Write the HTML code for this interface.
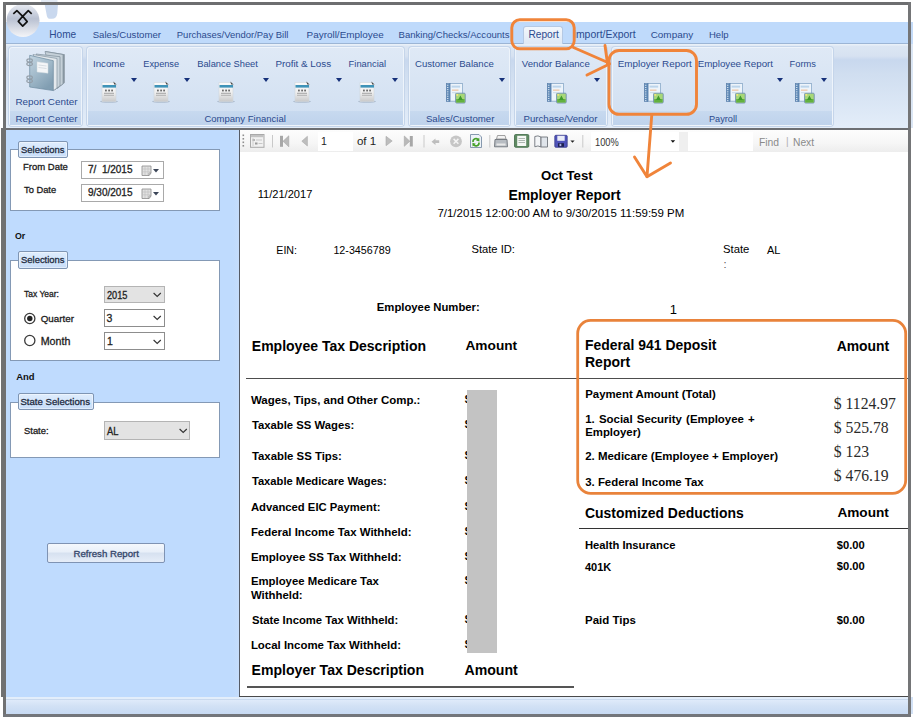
<!DOCTYPE html>
<html><head><meta charset="utf-8">
<style>
*{margin:0;padding:0;box-sizing:border-box}
html,body{width:913px;height:721px;overflow:hidden;background:#fff;font-family:"Liberation Sans",sans-serif}
.a{position:absolute;white-space:nowrap}
.grp{position:absolute;top:47px;height:79px;border:1px solid #eef4fb;border-radius:3px;background:linear-gradient(#dfe9f6,#d6e3f3 60%,#d0dff2);box-shadow:0 0 0 1px #c5d5ea}
.glab{position:absolute;left:0;right:0;bottom:0;height:14px;background:linear-gradient(#c7d9ef,#bfd3ec)}
.dd{position:absolute;top:77.5px;width:0;height:0;border-left:3.5px solid transparent;border-right:3.5px solid transparent;border-top:4px solid #16317a}
.ic{position:absolute}
</style></head><body>
<svg width="0" height="0" style="position:absolute">
<defs>
<linearGradient id="docg" x1="0" y1="0" x2="0" y2="1"><stop offset="0" stop-color="#fafafa"/><stop offset="0.55" stop-color="#eeeeee"/><stop offset="1" stop-color="#c9c9c9"/></linearGradient>
<linearGradient id="orbg" x1="0" y1="0" x2="0" y2="1"><stop offset="0" stop-color="#e9ecf3"/><stop offset="0.45" stop-color="#b9c1d2"/><stop offset="0.6" stop-color="#c9cfdc"/><stop offset="1" stop-color="#f4f5f8"/></linearGradient>
<linearGradient id="bookc" x1="0" y1="0" x2=".6" y2="1"><stop offset="0" stop-color="#c3d5e1"/><stop offset=".5" stop-color="#a3bbcb"/><stop offset="1" stop-color="#819eb2"/></linearGradient>
<symbol id="doc" viewBox="0 0 18 22">
 <ellipse cx="9" cy="20.6" rx="9" ry="1.1" fill="#7f8ea3" opacity=".45"/>
 <path d="M2 1.5 H14.5 L16 3 V20.5 H2 Z" fill="url(#docg)" stroke="#d2d6dc" stroke-width=".6"/>
 <rect x="2.5" y="4" width="13.5" height="2.6" fill="#3f93b8"/>
 <path d="M13.3 0.6 L16.6 3.6 L14.2 3.6 Z" fill="#4b4b4b"/>
 <rect x="5" y="8.6" width="1.8" height="1.8" fill="#6d6d6d"/><rect x="8.2" y="8.6" width="1.8" height="1.8" fill="#6d6d6d"/><rect x="11.2" y="8.6" width="1.8" height="1.8" fill="#6d6d6d"/>
 <rect x="4" y="11.8" width="10" height=".9" fill="#9a9a9a"/><rect x="4" y="13.8" width="10" height=".9" fill="#aaaaaa"/>
</symbol>
<symbol id="book" viewBox="0 0 20 21">
 <rect x="3.6" y="0.6" width="13" height="17.6" fill="#edf4fb" stroke="#89a9c8" stroke-width=".8"/>
 <rect x="0.3" y="0.6" width="3.8" height="18" fill="#5f89b6" stroke="#4c73a0" stroke-width=".5"/>
 <g fill="#dce8f4"><rect x="1" y="1.8" width="1.4" height=".9"/><rect x="1" y="4" width="1.4" height=".9"/><rect x="1" y="6.2" width="1.4" height=".9"/><rect x="1" y="8.4" width="1.4" height=".9"/><rect x="1" y="10.6" width="1.4" height=".9"/><rect x="1" y="12.8" width="1.4" height=".9"/><rect x="1" y="15" width="1.4" height=".9"/><rect x="1" y="17.2" width="1.4" height=".9"/></g>
 <rect x="5.6" y="2.6" width="8.6" height="2" fill="#bcd4ea"/>
 <rect x="6" y="6.4" width="6.5" height="1.6" fill="#efcfb5"/>
 <rect x="6" y="9.2" width="4" height="1" fill="#c9d9e8"/>
 <rect x="9.6" y="10.2" width="9.6" height="9.8" rx="1" fill="#a8d878" stroke="#6e8fae" stroke-width=".9"/>
 <rect x="10.2" y="16" width="8.4" height="3.4" fill="#62b13f"/>
 <path d="M12 17 L14.4 12.6 L16.8 17 Z" fill="#3e9a2c"/>
 <rect x="10.4" y="11" width="1.8" height="1.8" fill="#f4e27a"/>
</symbol>
</defs>
</svg>

<!-- title area -->
<div class="a" style="left:0;top:0;width:913px;height:22px;background:#fff"></div>
<!-- ghost arc -->
<svg class="ic" style="left:0;top:0" width="70" height="22"><path d="M41 0 H57.5 V2 H41 Z" fill="#e3eaf4"/><path d="M44.6 4 H58 L57.3 13.5 Q56.5 18.8 52 18.8 L49.5 18.8 Q47 18.8 46.5 14 Z" fill="#c9d8ee"/></svg>

<!-- tab bar -->
<div class="a" style="left:6px;top:22px;width:902px;height:22px;background:#bfdafb;border-bottom:1px solid #9cb5d5"></div>
<!-- active Report tab -->
<div class="a" style="left:523px;top:26px;width:40px;height:19px;border:1px solid #b5c9e4;border-bottom:none;border-radius:3px 3px 0 0;background:linear-gradient(#f3f7fc,#dce7f5)"></div>

<!-- ribbon body -->
<div class="a" style="left:6px;top:44px;width:902px;height:84px;background:linear-gradient(#e9f0f8 0,#e9f0f8 1px,#dce6f3 2px,#d7e2f1 12px,#c8d8ee 16px,#d0def0 30px,#e3edf9 83px)"></div>

<div class="grp" style="left:9px;width:73px"><div class="glab"></div></div>
<div class="grp" style="left:87px;width:317px"><div class="glab"></div></div>
<div class="grp" style="left:409px;width:101px"><div class="glab"></div></div>
<div class="grp" style="left:515px;width:92px"><div class="glab"></div></div>
<div class="grp" style="left:612px;width:221px"><div class="glab"></div></div>

<!-- dropdown arrows -->
<div class="dd" style="left:130.5px"></div>
<div class="dd" style="left:183.5px"></div>
<div class="dd" style="left:262.7px"></div>
<div class="dd" style="left:335.6px"></div>
<div class="dd" style="left:391.8px"></div>
<div class="dd" style="left:498.6px"></div>
<div class="dd" style="left:593.9px"></div>
<div class="dd" style="left:776.5px"></div>
<div class="dd" style="left:821px"></div>

<!-- doc icons -->
<svg class="ic" style="left:99.5px;top:80.8px" width="18" height="22"><use href="#doc"/></svg>
<svg class="ic" style="left:151.5px;top:80.8px" width="18" height="22"><use href="#doc"/></svg>
<svg class="ic" style="left:216.8px;top:80.8px" width="18" height="22"><use href="#doc"/></svg>
<svg class="ic" style="left:292.7px;top:80.8px" width="18" height="22"><use href="#doc"/></svg>
<svg class="ic" style="left:358.2px;top:80.8px" width="18" height="22"><use href="#doc"/></svg>
<!-- book icons -->
<svg class="ic" style="left:445.5px;top:82.5px" width="20" height="21"><use href="#book"/></svg>
<svg class="ic" style="left:547px;top:82.5px" width="20" height="21"><use href="#book"/></svg>
<svg class="ic" style="left:644px;top:82.5px" width="20" height="21"><use href="#book"/></svg>
<svg class="ic" style="left:725.5px;top:82.5px" width="20" height="21"><use href="#book"/></svg>
<svg class="ic" style="left:795px;top:82.5px" width="20" height="21"><use href="#book"/></svg>

<!-- report center icon -->
<svg class="ic" style="left:24px;top:48px" width="44" height="48" viewBox="0 0 44 48">
 <path d="M21.3 3 L40.8 6.3 L40.8 34.7 L33 41 Z" fill="#8d9aa5"/>
 <path d="M21 3.5 L39 6.5 L39 36 L31 41.5 Z" fill="#c5d0d8" stroke="#7f8f9c" stroke-width=".7"/>
 <path d="M12 6 L36 8.7 L36 38 L30 42 Z" fill="#c9d4dc" stroke="#7d8d9a" stroke-width=".7"/>
 <path d="M9 6.5 L33 10.5 L33 40 L29.5 42.6 Z" fill="#e4e9ed" stroke="#8595a2" stroke-width=".7"/>
 <path d="M5.7 7.3 L29.3 12.7 L29.3 42.6 L5.7 39 Z" fill="url(#bookc)" stroke="#6b899f" stroke-width=".7"/>
 <path d="M13 13.7 L24 15.3 L24 25.2 L13 24 Z" fill="#f4f6f8" stroke="#cfd8df" stroke-width=".5"/>
 <path d="M14.5 17 L22.5 18 M14.5 19.5 L22.5 20.5" stroke="#c2ccd4" stroke-width=".6"/>
 <ellipse cx="5.6" cy="12.5" rx="2.8" ry="1.6" fill="none" stroke="#939ea8" stroke-width="1.1"/>
 <ellipse cx="5.6" cy="16" rx="2.8" ry="1.6" fill="none" stroke="#939ea8" stroke-width="1.1"/>
 <ellipse cx="5.6" cy="29.5" rx="2.8" ry="1.6" fill="none" stroke="#939ea8" stroke-width="1.1"/>
 <ellipse cx="5.6" cy="33" rx="2.8" ry="1.6" fill="none" stroke="#939ea8" stroke-width="1.1"/>
</svg>

<!-- orb -->
<svg class="ic" style="left:5px;top:3px" width="38" height="36" viewBox="0 0 38 36">
 <circle cx="18" cy="17.5" r="16.5" fill="url(#orbg)"/>
 <path d="M8.3 10.8 L11.9 7.6 L17.7 13.3 L23.3 7.6 L26.7 10.8" fill="none" stroke="#111" stroke-width="1.7" stroke-linejoin="round"/>
 <path d="M17.7 13.3 L22.2 18.6 L17.7 23.1 L13.3 18.4 Z" fill="none" stroke="#111" stroke-width="1.7" stroke-linejoin="round"/>
</svg>
<!-- gray separator under ribbon -->
<div class="a" style="left:3px;top:128px;width:908px;height:2px;background:#6d6f73"></div>

<!-- left panel -->
<div class="a" style="left:6px;top:130px;width:233px;height:567px;background:#bfdbfe"></div>
<div class="a" style="left:233px;top:130px;width:6px;height:567px;background:linear-gradient(90deg,#bfdbfe,#c5ddfc)"></div>
<div class="a" style="left:238.8px;top:130px;width:1.3px;height:567px;background:#555b66"></div>

<!-- group boxes left panel -->
<div class="a" style="left:9.5px;top:149px;width:210px;height:62px;background:#fff;border:1px solid #8499b5"></div>
<div class="a" style="left:9.5px;top:259.5px;width:210px;height:101.5px;background:#fff;border:1px solid #8499b5"></div>
<div class="a" style="left:9.5px;top:402px;width:210px;height:56px;background:#fff;border:1px solid #8499b5"></div>
<div class="a" style="left:17.8px;top:140.5px;width:50px;height:17.5px;background:linear-gradient(#dfedfd,#c8ddf8);border:1px solid #7f95b3;border-radius:2px;box-shadow:inset 0 0 0 1px rgba(255,255,255,.45)"></div>
<div class="a" style="left:17.8px;top:251px;width:50px;height:17.5px;background:linear-gradient(#dfedfd,#c8ddf8);border:1px solid #7f95b3;border-radius:2px;box-shadow:inset 0 0 0 1px rgba(255,255,255,.45)"></div>
<div class="a" style="left:17.8px;top:392.7px;width:76px;height:17px;background:linear-gradient(#dfedfd,#c8ddf8);border:1px solid #7f95b3;border-radius:2px;box-shadow:inset 0 0 0 1px rgba(255,255,255,.45)"></div>

<!-- date pickers -->
<div class="a" style="left:80.8px;top:160.8px;width:83.5px;height:18.6px;background:#fff;border:1px solid #a9a9a9"></div>
<div class="a" style="left:80.8px;top:183.6px;width:83.5px;height:18.8px;background:#fff;border:1px solid #a9a9a9"></div>
<svg class="ic" style="left:140.5px;top:164.8px" width="19" height="12" viewBox="0 0 19 12">
 <path d="M1 1 H10 V8 L8 10.5 H1 Z" fill="#e2e2e2" stroke="#8c8c8c" stroke-width=".8"/><path d="M1.5 4 H9.5 M1.5 6.8 H9.5 M4 1.5 V10 M7 1.5 V10" stroke="#bdbdbd" stroke-width=".6"/><path d="M10 8 L8 10.5 L8 8 Z" fill="#f3f3f3" stroke="#8c8c8c" stroke-width=".6"/>
 <path d="M12 4 H18 L15 7.5 Z" fill="#3c4658"/>
</svg>
<svg class="ic" style="left:140.5px;top:187.6px" width="19" height="12" viewBox="0 0 19 12">
 <path d="M1 1 H10 V8 L8 10.5 H1 Z" fill="#e2e2e2" stroke="#8c8c8c" stroke-width=".8"/><path d="M1.5 4 H9.5 M1.5 6.8 H9.5 M4 1.5 V10 M7 1.5 V10" stroke="#bdbdbd" stroke-width=".6"/><path d="M10 8 L8 10.5 L8 8 Z" fill="#f3f3f3" stroke="#8c8c8c" stroke-width=".6"/>
 <path d="M12 4 H18 L15 7.5 Z" fill="#3c4658"/>
</svg>

<!-- combos -->
<div class="a" style="left:103.5px;top:285.6px;width:61px;height:17.3px;background:#e3e3e3;border:1px solid #b4b4b4"></div>
<div class="a" style="left:103.5px;top:309px;width:61px;height:17.7px;background:#fff;border:1px solid #8d8d8d"></div>
<div class="a" style="left:103.5px;top:332.4px;width:61px;height:17.8px;background:#fff;border:1px solid #8d8d8d"></div>
<div class="a" style="left:103.5px;top:421.4px;width:86px;height:18.4px;background:#e3e3e3;border:1px solid #b4b4b4"></div>
<svg class="ic" style="left:151.8px;top:290.8px" width="10" height="7"><path d="M1.6 2 L5.2 5.4 L8.8 2" fill="none" stroke="#333" stroke-width="1.15"/></svg>
<svg class="ic" style="left:151.8px;top:314.2px" width="10" height="7"><path d="M1.6 2 L5.2 5.4 L8.8 2" fill="none" stroke="#333" stroke-width="1.15"/></svg>
<svg class="ic" style="left:151.8px;top:337.8px" width="10" height="7"><path d="M1.6 2 L5.2 5.4 L8.8 2" fill="none" stroke="#333" stroke-width="1.15"/></svg>
<svg class="ic" style="left:177.5px;top:426.5px" width="10" height="7"><path d="M1.6 2 L5.2 5.4 L8.8 2" fill="none" stroke="#333" stroke-width="1.15"/></svg>

<!-- radios -->
<svg class="ic" style="left:22.8px;top:312px" width="14" height="14"><circle cx="6.8" cy="6.5" r="5.1" fill="#fff" stroke="#3a3a3a" stroke-width="1.3"/><circle cx="6.8" cy="6.5" r="2.7" fill="#222"/></svg>
<svg class="ic" style="left:22.8px;top:334px" width="14" height="14"><circle cx="6.8" cy="6.5" r="5.1" fill="#fff" stroke="#3a3a3a" stroke-width="1.3"/></svg>

<!-- refresh button -->
<div class="a" style="left:47.4px;top:543.2px;width:117.2px;height:20.3px;border:1px solid #7f93b3;border-radius:2px;background:linear-gradient(#f4f8fd 0,#e8eff9 45%,#d6e1f0 50%,#e6edf8 100%)"></div>

<!-- report area -->
<div class="a" style="left:240px;top:130px;width:668px;height:567px;background:#fff"></div>
<div class="a" style="left:240px;top:130px;width:668px;height:22px;background:linear-gradient(#fdfdfd,#f6f6f6 60%,#ededed)"></div>
<div class="a" style="left:239px;top:696px;width:669px;height:1px;background:#4a4a4a"></div>
<!-- toolbar -->
<div class="a" style="left:317.5px;top:131.5px;width:35.5px;height:19px;background:#fff"></div>
<div class="a" style="left:591px;top:131.5px;width:88px;height:19px;background:#fff"></div>
<div class="a" style="left:679px;top:131.5px;width:9px;height:19px;background:#efefef"></div>
<div class="a" style="left:688px;top:131.5px;width:65px;height:19px;background:#fff"></div>


<!-- toolbar icons -->
<svg class="ic" style="left:240px;top:131px" width="350" height="20" viewBox="240 131 350 20">
 <g fill="#8f8f8f"><rect x="242.5" y="134.5" width="1.6" height="1.6"/><rect x="242.5" y="138" width="1.6" height="1.6"/><rect x="242.5" y="141.5" width="1.6" height="1.6"/><rect x="242.5" y="145" width="1.6" height="1.6"/></g>
 <rect x="250.5" y="134.5" width="13.5" height="12.8" fill="#f1f1f1" stroke="#a9a9a9" stroke-width="1"/>
 <rect x="251" y="135" width="12.5" height="2.2" fill="#c2c2c2"/>
 <rect x="252.5" y="139" width="2.5" height="2" fill="#b5b5b5"/><rect x="256" y="139.5" width="6" height="1" fill="#c8c8c8"/>
 <rect x="255" y="142.5" width="2.5" height="2" fill="#9a9a9a"/><rect x="258.5" y="143" width="4" height="1" fill="#c8c8c8"/>
 <path d="M253 138 V146" stroke="#c6c6c6" stroke-width=".8"/>
 <rect x="272" y="135" width="1" height="12.5" fill="#c9c9c9"/>
 <rect x="280" y="135.8" width="3" height="11" fill="#a7a7a7"/>
 <path d="M288.8 135.8 V146.8 L283 141.3 Z" fill="#b9b9b9" stroke="#a5a5a5" stroke-width=".6"/>
 <path d="M307.4 136.3 V146 L301.8 141.2 Z" fill="#bdbdbd" stroke="#a9a9a9" stroke-width=".6"/>
 <path d="M386 136.3 V145.7 L392.2 141 Z" fill="#bdbdbd" stroke="#a9a9a9" stroke-width=".6"/>
 <path d="M404.3 136 V146.3 L409.8 141.2 Z" fill="#b9b9b9" stroke="#a5a5a5" stroke-width=".6"/>
 <rect x="409.8" y="136" width="3" height="10.5" fill="#a7a7a7"/>
 <rect x="423.5" y="135" width="1" height="12.5" fill="#c9c9c9"/>
 <path d="M431.5 141.7 L435.5 138.5 V140.3 H439.2 V143.1 H435.5 V144.9 Z" fill="#bdbdbd"/>
 <circle cx="456" cy="141.3" r="5.9" fill="#c6c6c6"/>
 <path d="M453.6 138.9 L458.4 143.7 M458.4 138.9 L453.6 143.7" stroke="#f4f4f4" stroke-width="1.5"/>
 <path d="M470.5 134.5 H479 L481.5 137 V147.5 H470.5 Z" fill="#eef3f8" stroke="#7b8fa6" stroke-width=".9"/>
 <path d="M473 142 A3 3 0 0 1 478.5 140" fill="none" stroke="#46a12a" stroke-width="1.6"/>
 <path d="M479.2 137.8 L479.5 141.5 L476 140.5 Z" fill="#46a12a"/>
 <path d="M479 142.5 A3 3 0 0 1 473.5 144.5" fill="none" stroke="#46a12a" stroke-width="1.6"/>
 <path d="M472.6 146.5 L472.4 142.8 L475.8 143.8 Z" fill="#46a12a"/>
 <rect x="489.3" y="135" width="1" height="12.5" fill="#c9c9c9"/>
 <path d="M497.5 135.5 H505 L506 139 H496.5 Z" fill="#f3f3f3" stroke="#8a8a8a" stroke-width=".8"/>
 <path d="M495 139.5 H507 L507.5 146.8 H494.5 Z" fill="#b7bcc2" stroke="#6e747a" stroke-width=".9"/>
 <rect x="496.5" y="143.5" width="9" height="2" fill="#e8e8e8"/>
 <rect x="514.5" y="134.5" width="14.3" height="12.8" rx="1.2" fill="#5f8a63" stroke="#3f6a45" stroke-width=".8"/>
 <rect x="517.2" y="135.8" width="9" height="10.2" fill="#f5f8f5"/>
 <path d="M518.5 138.5 h6.5 M518.5 140.5 h6.5 M518.5 142.5 h6.5" stroke="#9aa6a0" stroke-width=".8"/>
 <path d="M534.8 136.5 Q538 135 541 137 V147 Q538 145 534.8 146.8 Z" fill="#f3f5f7" stroke="#6f757c" stroke-width=".9"/>
 <path d="M541 137 H547.5 V147 H541 Z" fill="#dfe4ea" stroke="#6f757c" stroke-width=".9"/>
 <rect x="554.8" y="135.3" width="12.4" height="12" rx="1" fill="#4f53b9" stroke="#383c8c" stroke-width=".8"/>
 <rect x="557.3" y="135.8" width="7.4" height="5" fill="#e9ecf8"/>
 <rect x="558" y="143.2" width="6" height="3.6" fill="#1e2150"/>
 <rect x="559.5" y="143.8" width="1.8" height="2.3" fill="#aeb3e6"/>
 <path d="M570.4 140.5 H574.6 L572.5 142.8 Z" fill="#222"/>
 <rect x="582.3" y="135" width="1" height="12.5" fill="#c9c9c9"/>
</svg>
<svg class="ic" style="left:668px;top:138px" width="10" height="6"><path d="M2.6 2.2 H7.2 L4.9 4.8 Z" fill="#111"/></svg>

<!-- report lines -->
<div class="a" style="left:246px;top:377.5px;width:662px;height:1.5px;background:#4d4d4d"></div>
<div class="a" style="left:579px;top:527.5px;width:329px;height:1.5px;background:#333"></div>
<div class="a" style="left:247px;top:686px;width:327px;height:1.5px;background:#555"></div>

<!-- status bar -->
<div class="a" style="left:6px;top:697px;width:902px;height:17px;background:linear-gradient(#e3eefb 0,#e3eefb 2px,#c9d9ee 2px,#c9d9ee 3px,#dfeafa 3px,#d2e1f5 9px,#c7daf3 100%)"></div>
<div class="a" style="left:49.3px;top:24.7px;font:400 10.08px/20px 'Liberation Sans';color:#2b4a8e;">Home</div>
<div class="a" style="left:92.7px;top:24.8px;font:400 9.6px/20px 'Liberation Sans';color:#2b4a8e;">Sales/Customer</div>
<div class="a" style="left:176.8px;top:24.9px;font:400 9.48px/20px 'Liberation Sans';color:#2b4a8e;">Purchases/Vendor/Pay Bill</div>
<div class="a" style="left:306.6px;top:24.7px;font:400 9.92px/20px 'Liberation Sans';color:#2b4a8e;">Payroll/Employee</div>
<div class="a" style="left:398.6px;top:24.8px;font:400 9.55px/20px 'Liberation Sans';color:#2b4a8e;">Banking/Checks/Accounts</div>
<div class="a" style="left:528.4px;top:24.6px;font:400 10.19px/20px 'Liberation Sans';color:#2b4a8e;">Report</div>
<div class="a" style="left:573px;top:24.5px;font:400 10.46px/20px 'Liberation Sans';color:#2b4a8e;">Import/Export</div>
<div class="a" style="left:650.7px;top:24.7px;font:400 9.93px/20px 'Liberation Sans';color:#2b4a8e;">Company</div>
<div class="a" style="left:709px;top:24.9px;font:400 9.52px/20px 'Liberation Sans';color:#2b4a8e;">Help</div>
<div class="a" style="left:15.5px;top:92.3px;font:400 9.87px/20px 'Liberation Sans';color:#2b4a8e;">Report Center</div>
<div class="a" style="left:93px;top:53.8px;font:400 9.73px/20px 'Liberation Sans';color:#2b4a8e;">Income</div>
<div class="a" style="left:143.3px;top:54.0px;font:400 9.2px/20px 'Liberation Sans';color:#2b4a8e;">Expense</div>
<div class="a" style="left:197.2px;top:53.9px;font:400 9.34px/20px 'Liberation Sans';color:#2b4a8e;">Balance Sheet</div>
<div class="a" style="left:275.4px;top:53.8px;font:400 9.84px/20px 'Liberation Sans';color:#2b4a8e;">Profit &amp; Loss</div>
<div class="a" style="left:348.6px;top:53.9px;font:400 9.37px/20px 'Liberation Sans';color:#2b4a8e;">Financial</div>
<div class="a" style="left:415px;top:53.8px;font:400 9.59px/20px 'Liberation Sans';color:#2b4a8e;">Customer Balance</div>
<div class="a" style="left:521.8px;top:53.8px;font:400 9.63px/20px 'Liberation Sans';color:#2b4a8e;">Vendor Balance</div>
<div class="a" style="left:617.8px;top:53.7px;font:400 9.86px/20px 'Liberation Sans';color:#2b4a8e;">Employer Report</div>
<div class="a" style="left:697.7px;top:53.8px;font:400 9.76px/20px 'Liberation Sans';color:#2b4a8e;">Employee Report</div>
<div class="a" style="left:789.6px;top:53.9px;font:400 9.31px/20px 'Liberation Sans';color:#2b4a8e;">Forms</div>
<div class="a" style="left:15.5px;top:108.7px;font:400 9.87px/20px 'Liberation Sans';color:#2b4a8e;">Report Center</div>
<div class="a" style="left:204.4px;top:108.9px;font:400 9.53px/20px 'Liberation Sans';color:#2b4a8e;">Company Financial</div>
<div class="a" style="left:425.9px;top:108.8px;font:400 9.64px/20px 'Liberation Sans';color:#2b4a8e;">Sales/Customer</div>
<div class="a" style="left:523.5px;top:108.8px;font:400 9.63px/20px 'Liberation Sans';color:#2b4a8e;">Purchase/Vendor</div>
<div class="a" style="left:709px;top:109.0px;font:400 9.19px/20px 'Liberation Sans';color:#2b4a8e;">Payroll</div>
<div class="a" style="left:20.6px;top:139.5px;font:400 9.6px/20px 'Liberation Sans';color:#1e2b40;transform:scaleX(0.984);transform-origin:0 0;-webkit-text-stroke:0.3px currentColor;">Selections</div>
<div class="a" style="left:22.8px;top:156.8px;font:400 9.6px/20px 'Liberation Sans';color:#1b1b1b;transform:scaleX(0.991);transform-origin:0 0;-webkit-text-stroke:0.3px currentColor;">From Date</div>
<div class="a" style="left:23.5px;top:179.6px;font:400 9.6px/20px 'Liberation Sans';color:#1b1b1b;transform:scaleX(0.970);transform-origin:0 0;-webkit-text-stroke:0.3px currentColor;">To Date</div>
<div class="a" style="left:88px;top:160.3px;font:400 10.0px/20px 'Liberation Sans';color:#222;-webkit-text-stroke:0.3px currentColor;">7/ &nbsp;1/2015</div>
<div class="a" style="left:88px;top:182.8px;font:400 10.0px/20px 'Liberation Sans';color:#222;-webkit-text-stroke:0.3px currentColor;">9/30/2015</div>
<div class="a" style="left:15px;top:225.6px;font:700 8.82px/20px 'Liberation Sans';color:#111;">Or</div>
<div class="a" style="left:20.5px;top:249.7px;font:400 9.6px/20px 'Liberation Sans';color:#1e2b40;transform:scaleX(0.984);transform-origin:0 0;-webkit-text-stroke:0.3px currentColor;">Selections</div>
<div class="a" style="left:24px;top:284.0px;font:400 9.6px/20px 'Liberation Sans';color:#1b1b1b;transform:scaleX(0.885);transform-origin:0 0;-webkit-text-stroke:0.3px currentColor;">Tax Year:</div>
<div class="a" style="left:107px;top:284.5px;font:400 10.5px/20px 'Liberation Sans';color:#222;transform:scaleX(0.877);transform-origin:0 0;-webkit-text-stroke:0.3px currentColor;">2015</div>
<div class="a" style="left:40.7px;top:309.2px;font:400 9.82px/20px 'Liberation Sans';color:#1b1b1b;-webkit-text-stroke:0.3px currentColor;">Quarter</div>
<div class="a" style="left:106.5px;top:307.5px;font:400 10.5px/20px 'Liberation Sans';color:#222;-webkit-text-stroke:0.3px currentColor;">3</div>
<div class="a" style="left:40.7px;top:330.9px;font:400 10.68px/20px 'Liberation Sans';color:#1b1b1b;-webkit-text-stroke:0.3px currentColor;">Month</div>
<div class="a" style="left:107px;top:330.9px;font:400 10.5px/20px 'Liberation Sans';color:#222;-webkit-text-stroke:0.3px currentColor;">1</div>
<div class="a" style="left:16.2px;top:367.1px;font:700 9.46px/20px 'Liberation Sans';color:#111;">And</div>
<div class="a" style="left:20.4px;top:392.0px;font:400 9.64px/20px 'Liberation Sans';color:#1e2b40;-webkit-text-stroke:0.3px currentColor;">State Selections</div>
<div class="a" style="left:23.5px;top:420.9px;font:400 9.6px/20px 'Liberation Sans';color:#1b1b1b;transform:scaleX(0.980);transform-origin:0 0;-webkit-text-stroke:0.3px currentColor;">State:</div>
<div class="a" style="left:106.8px;top:421.4px;font:400 10.5px/20px 'Liberation Sans';color:#222;transform:scaleX(0.888);transform-origin:0 0;-webkit-text-stroke:0.3px currentColor;">AL</div>
<div class="a" style="left:73.4px;top:544.0px;font:400 9.69px/20px 'Liberation Sans';color:#34466a;-webkit-text-stroke:0.3px currentColor;">Refresh Report</div>
<div class="a" style="left:321px;top:131.4px;font:400 10.5px/20px 'Liberation Sans';color:#222;">1</div>
<div class="a" style="left:356.9px;top:131.2px;font:400 11.57px/20px 'Liberation Sans';color:#222;">of 1</div>
<div class="a" style="left:594.6px;top:131.8px;font:400 10.5px/20px 'Liberation Sans';color:#333;transform:scaleX(0.883);transform-origin:0 0;">100%</div>
<div class="a" style="left:759.4px;top:131.8px;font:400 10.5px/20px 'Liberation Sans';color:#8a8a8a;transform:scaleX(0.984);transform-origin:0 0;">Find</div>
<div class="a" style="left:786px;top:131.7px;font:400 10px/20px 'Liberation Sans';color:#b0b0b0;">|</div>
<div class="a" style="left:793.4px;top:131.8px;font:400 10.5px/20px 'Liberation Sans';color:#8a8a8a;transform:scaleX(0.977);transform-origin:0 0;">Next</div>
<div class="a" style="left:257.7px;top:184.1px;font:400 11.09px/20px 'Liberation Sans';color:#000;">11/21/2017</div>
<div class="a" style="left:540.9px;top:165.7px;font:700 13.19px/20px 'Liberation Sans';color:#000;">Oct Test</div>
<div class="a" style="left:508.4px;top:185.4px;font:700 13.95px/20px 'Liberation Sans';color:#000;">Employer Report</div>
<div class="a" style="left:437.4px;top:202.7px;font:400 11.49px/20px 'Liberation Sans';color:#000;">7/1/2015 12:00:00 AM to 9/30/2015 11:59:59 PM</div>
<div class="a" style="left:276.3px;top:239.6px;font:400 10.64px/20px 'Liberation Sans';color:#000;">EIN:</div>
<div class="a" style="left:333.4px;top:239.6px;font:400 10.73px/20px 'Liberation Sans';color:#000;">12-3456789</div>
<div class="a" style="left:471.5px;top:239.4px;font:400 11.18px/20px 'Liberation Sans';color:#000;">State ID:</div>
<div class="a" style="left:723px;top:239.4px;font:400 11.3px/20px 'Liberation Sans';color:#000;">State</div>
<div class="a" style="left:723.6px;top:253.6px;font:400 11px/20px 'Liberation Sans';color:#555;">:</div>
<div class="a" style="left:767px;top:239.5px;font:400 10.95px/20px 'Liberation Sans';color:#000;">AL</div>
<div class="a" style="left:376.8px;top:297.3px;font:700 11.3px/20px 'Liberation Sans';color:#000;">Employee Number:</div>
<div class="a" style="left:669.8px;top:299.5px;font:400 13px/20px 'Liberation Sans';color:#000;">1</div>
<div class="a" style="left:251.8px;top:336.2px;font:700 14.02px/20px 'Liberation Sans';color:#000;">Employee Tax Description</div>
<div class="a" style="left:465.5px;top:336.3px;font:700 13.68px/20px 'Liberation Sans';color:#000;">Amount</div>
<div class="a" style="left:585px;top:334.9px;font:700 13.92px/20px 'Liberation Sans';color:#000;">Federal 941 Deposit</div>
<div class="a" style="left:585px;top:351.8px;font:700 14px/20px 'Liberation Sans';color:#000;">Report</div>
<div class="a" style="left:836.7px;top:336.0px;font:700 13.92px/20px 'Liberation Sans';color:#000;">Amount</div>
<div class="a" style="left:250.9px;top:390.3px;font:700 11.48px/20px 'Liberation Sans';color:#000;">Wages, Tips, and Other Comp.:</div>
<div class="a" style="left:251.9px;top:415.1px;font:700 11.31px/20px 'Liberation Sans';color:#000;">Taxable SS Wages:</div>
<div class="a" style="left:251.9px;top:445.7px;font:700 11.39px/20px 'Liberation Sans';color:#000;">Taxable SS Tips:</div>
<div class="a" style="left:251.9px;top:471.4px;font:700 11.2px/20px 'Liberation Sans';color:#000;">Taxable Medicare Wages:</div>
<div class="a" style="left:250.9px;top:497.2px;font:700 11.27px/20px 'Liberation Sans';color:#000;">Advanced EIC Payment:</div>
<div class="a" style="left:250.9px;top:522.2px;font:700 11.41px/20px 'Liberation Sans';color:#000;">Federal Income Tax Withheld:</div>
<div class="a" style="left:250.9px;top:546.6px;font:700 11.52px/20px 'Liberation Sans';color:#000;">Employee SS Tax Withheld:</div>
<div class="a" style="left:250.9px;top:571.2px;font:700 11.37px/20px 'Liberation Sans';color:#000;">Employee Medicare Tax</div>
<div class="a" style="left:250.9px;top:584.8px;font:700 11.4px/20px 'Liberation Sans';color:#000;">Withheld:</div>
<div class="a" style="left:251.9px;top:609.8px;font:700 11.29px/20px 'Liberation Sans';color:#000;">State Income Tax Withheld:</div>
<div class="a" style="left:250.9px;top:634.9px;font:700 11.43px/20px 'Liberation Sans';color:#000;">Local Income Tax Withheld:</div>
<div class="a" style="left:251.6px;top:660.4px;font:700 14.07px/20px 'Liberation Sans';color:#000;">Employer Tax Description</div>
<div class="a" style="left:464.5px;top:660.3px;font:700 14.11px/20px 'Liberation Sans';color:#000;">Amount</div>
<div class="a" style="left:464.8px;top:389.3px;font:700 11.4px/20px 'Liberation Sans';color:#000;">$</div>
<div class="a" style="left:464.8px;top:414.0px;font:700 11.4px/20px 'Liberation Sans';color:#000;">$</div>
<div class="a" style="left:464.8px;top:444.7px;font:700 11.4px/20px 'Liberation Sans';color:#000;">$</div>
<div class="a" style="left:464.8px;top:470.3px;font:700 11.4px/20px 'Liberation Sans';color:#000;">$</div>
<div class="a" style="left:464.8px;top:496.1px;font:700 11.4px/20px 'Liberation Sans';color:#000;">$</div>
<div class="a" style="left:464.8px;top:521.2px;font:700 11.4px/20px 'Liberation Sans';color:#000;">$</div>
<div class="a" style="left:464.8px;top:545.6px;font:700 11.4px/20px 'Liberation Sans';color:#000;">$</div>
<div class="a" style="left:464.8px;top:570.2px;font:700 11.4px/20px 'Liberation Sans';color:#000;">$</div>
<div class="a" style="left:464.8px;top:608.7px;font:700 11.4px/20px 'Liberation Sans';color:#000;">$</div>
<div class="a" style="left:464.8px;top:633.9px;font:700 11.4px/20px 'Liberation Sans';color:#000;">$</div>
<div class="a" style="left:585.2px;top:384.3px;font:700 11.41px/20px 'Liberation Sans';color:#000;">Payment Amount (Total)</div>
<div class="a" style="left:585.2px;top:409.1px;font:700 11.45px/20px 'Liberation Sans';color:#000;word-spacing:1px;">1. Social Security (Employee +</div>
<div class="a" style="left:585.2px;top:421.6px;font:700 11.4px/20px 'Liberation Sans';color:#000;">Employer)</div>
<div class="a" style="left:585.2px;top:446.4px;font:700 11.47px/20px 'Liberation Sans';color:#000;">2. Medicare (Employee + Employer)</div>
<div class="a" style="left:585.2px;top:471.5px;font:700 11.43px/20px 'Liberation Sans';color:#000;">3. Federal Income Tax</div>
<div class="a" style="left:833.8px;top:394.1px;font:400 15.69px/20px 'Liberation Serif';color:#2a2a2a;">$ 1124.97</div>
<div class="a" style="left:833.8px;top:418.1px;font:400 15.7px/20px 'Liberation Serif';color:#2a2a2a;">$ 525.78</div>
<div class="a" style="left:833.8px;top:442.2px;font:400 15.7px/20px 'Liberation Serif';color:#2a2a2a;">$ 123</div>
<div class="a" style="left:833.8px;top:466.2px;font:400 15.7px/20px 'Liberation Serif';color:#2a2a2a;">$ 476.19</div>
<div class="a" style="left:585px;top:502.9px;font:700 13.94px/20px 'Liberation Sans';color:#000;">Customized Deductions</div>
<div class="a" style="left:837.4px;top:503.0px;font:700 13.63px/20px 'Liberation Sans';color:#000;">Amount</div>
<div class="a" style="left:585px;top:534.7px;font:700 11.22px/20px 'Liberation Sans';color:#000;">Health Insurance</div>
<div class="a" style="left:836.7px;top:534.7px;font:700 11.19px/20px 'Liberation Sans';color:#000;">$0.00</div>
<div class="a" style="left:585px;top:556.5px;font:700 11.0px/20px 'Liberation Sans';color:#000;">401K</div>
<div class="a" style="left:836.7px;top:556.4px;font:700 11.19px/20px 'Liberation Sans';color:#000;">$0.00</div>
<div class="a" style="left:585px;top:609.6px;font:700 11.47px/20px 'Liberation Sans';color:#000;">Paid Tips</div>
<div class="a" style="left:836.7px;top:609.7px;font:700 11.19px/20px 'Liberation Sans';color:#000;">$0.00</div>
<!-- gray redaction block -->
<div class="a" style="left:467.2px;top:390px;width:29.8px;height:263px;background:#c3c3c3"></div>
<!-- frame -->
<div class="a" style="left:3px;top:2px;width:908px;height:2.6px;background:#6d6e70"></div>
<div class="a" style="left:3px;top:2px;width:3px;height:715px;background:#707172"></div>
<div class="a" style="left:1px;top:128px;width:2px;height:569px;background:#707172"></div>
<div class="a" style="left:911px;top:697px;width:2px;height:17px;background:#d3e2f6"></div>
<div class="a" style="left:911px;top:22px;width:2px;height:22px;background:#c4dbf8"></div>
<div class="a" style="left:911px;top:44px;width:2px;height:84px;background:#dbe6f4"></div>
<div class="a" style="left:908px;top:2px;width:2.6px;height:715px;background:#747577"></div>
<div class="a" style="left:3px;top:714px;width:908px;height:3px;background:#73767b"></div>
<svg class="ic" style="left:0;top:0" width="913" height="721" viewBox="0 0 913 721">
 <g fill="none" stroke="#f0843a" stroke-width="2.9" stroke-linecap="round" stroke-linejoin="round">
  <rect x="511.8" y="19.8" width="62.4" height="29" rx="8"/>
  <path d="M573.5 47.5 L609 63"/>
  <path d="M605 45.5 L607.5 63.5"/>
  <path d="M587 75 L609.5 64"/>
  <rect x="609" y="50.5" width="87.5" height="63.8" rx="10"/>
  <path d="M651.8 114.5 L647 176.5"/>
  <path d="M634.5 157 L647 176.8 L670.5 163"/>
 </g>
 <rect x="577.7" y="320.4" width="328" height="172.9" rx="13" fill="none" stroke="#e9833b" stroke-width="2.8"/>
</svg>

</body></html>
